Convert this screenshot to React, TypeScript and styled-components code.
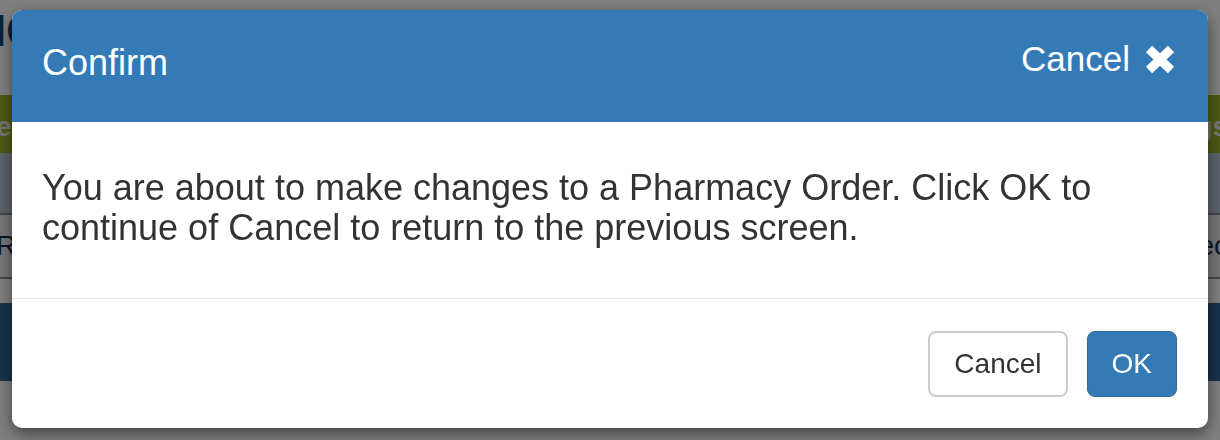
import React from "react";
import styled, { createGlobalStyle } from "styled-components";

const GlobalStyle = createGlobalStyle`
  html, body {
    margin: 0;
    padding: 0;
    background: #fff;
    font-family: "Liberation Sans", Arial, Helvetica, sans-serif;
    overflow: hidden;
  }
`;

const Page = styled.div`
  width: 1220px;
  height: 440px;
  overflow: hidden;
  background: #fff;
`;

const TitleBar = styled.div`
  height: 95px;
  padding-top: 6px;
  box-sizing: border-box;
  font-size: 44px;
  font-weight: bold;
  color: #14467a;
  margin-left: -6px;
`;

const GreenBar = styled.div`
  height: 58px;
  background: #a0b52c;
  color: #e9eef0;
  font-size: 28px;
  font-weight: bold;
  display: flex;
  align-items: center;
  justify-content: space-between;
  overflow: hidden;
  padding-top: 6px;
  box-sizing: border-box;
`;

const EdgeLabel = styled.span<{ $side: "left" | "right"; $offset?: number }>`
  margin-${(p) => p.$side}: ${(p) => -(p.$offset ?? 4)}px;
`;

const HeadRow = styled.div`
  height: 60px;
  background: #b9c6d6;
  border-bottom: 2px solid #8a8f96;
`;

const DataRow = styled.div`
  height: 62px;
  background: #eeeeee;
  border-bottom: 2px solid #8a8f96;
  display: flex;
  align-items: center;
  justify-content: space-between;
  font-size: 28px;
  color: #0e2f52;
  overflow: hidden;
`;

const Spacer = styled.div`
  height: 24px;
`;

const NavyBar = styled.div`
  height: 78px;
  background: #2f6597;
`;

const Backdrop = styled.div`
  position: fixed;
  inset: 0;
  background: rgba(0, 0, 0, 0.5);
`;

const Modal = styled.div`
  position: fixed;
  top: 10px;
  left: 12px;
  width: 1196px;
  background: #fff;
  border-radius: 10px;
  overflow: hidden;
  box-shadow: 0 5px 15px rgba(0, 0, 0, 0.5);
`;

const Header = styled.div`
  height: 112px;
  box-sizing: border-box;
  background: #337ab7;
  color: #fff;
  display: flex;
  align-items: flex-start;
  justify-content: space-between;
  padding: 33px 33px 0 30px;
`;

const Title = styled.h4`
  margin: 0;
  font-size: 36px;
  line-height: 40px;
  font-weight: normal;
`;

const CloseButton = styled.button`
  display: flex;
  align-items: center;
  gap: 15px;
  margin-top: -4px;
  padding: 0;
  border: 0;
  background: none;
  color: #fff;
  font-family: inherit;
  font-size: 35px;
  line-height: 40px;
  cursor: pointer;
`;

const Body = styled.div`
  padding: 46px 30px 50px;
  font-size: 36px;
  line-height: 40px;
  color: #333;
`;

const Footer = styled.div`
  border-top: 1px solid #e5e5e5;
  padding: 32px 31px 31px;
  display: flex;
  justify-content: flex-end;
  gap: 19px;
`;

const Button = styled.button<{ $primary?: boolean }>`
  height: 66px;
  padding: 0 24px;
  border-radius: 8px;
  font-family: inherit;
  font-size: 28px;
  cursor: pointer;
  background: ${(p) => (p.$primary ? "#337ab7" : "#fff")};
  color: ${(p) => (p.$primary ? "#fff" : "#333")};
  border: ${(p) => (p.$primary ? "1px solid #2e6da4" : "2px solid #ccc")};
`;

const TimesIcon = () => (
  <svg width="30" height="29" viewBox="0 0 30 29" aria-hidden="true">
    <path d="M4 4 L26 25 M26 4 L4 25" stroke="#fff" strokeWidth="9" />
  </svg>
);

export default function App() {
  return (
    <>
      <GlobalStyle />
      <Page>
        <TitleBar>IC</TitleBar>
        <GreenBar>
          <EdgeLabel $side="left">e</EdgeLabel>
          <EdgeLabel $side="right" $offset={8}>Settings</EdgeLabel>
        </GreenBar>
        <HeadRow />
        <DataRow>
          <EdgeLabel $side="left">R</EdgeLabel>
          <EdgeLabel $side="right" $offset={8}>Spec</EdgeLabel>
        </DataRow>
        <Spacer />
        <NavyBar />
      </Page>
      <Backdrop />
      <Modal role="dialog" aria-labelledby="confirm-title">
        <Header>
          <Title id="confirm-title">Confirm</Title>
          <CloseButton aria-label="Cancel">
            Cancel
            <TimesIcon />
          </CloseButton>
        </Header>
        <Body>
          You are about to make changes to a Pharmacy Order. Click OK to
          continue of Cancel to return to the previous screen.
        </Body>
        <Footer>
          <Button>Cancel</Button>
          <Button $primary>OK</Button>
        </Footer>
      </Modal>
    </>
  );
}
